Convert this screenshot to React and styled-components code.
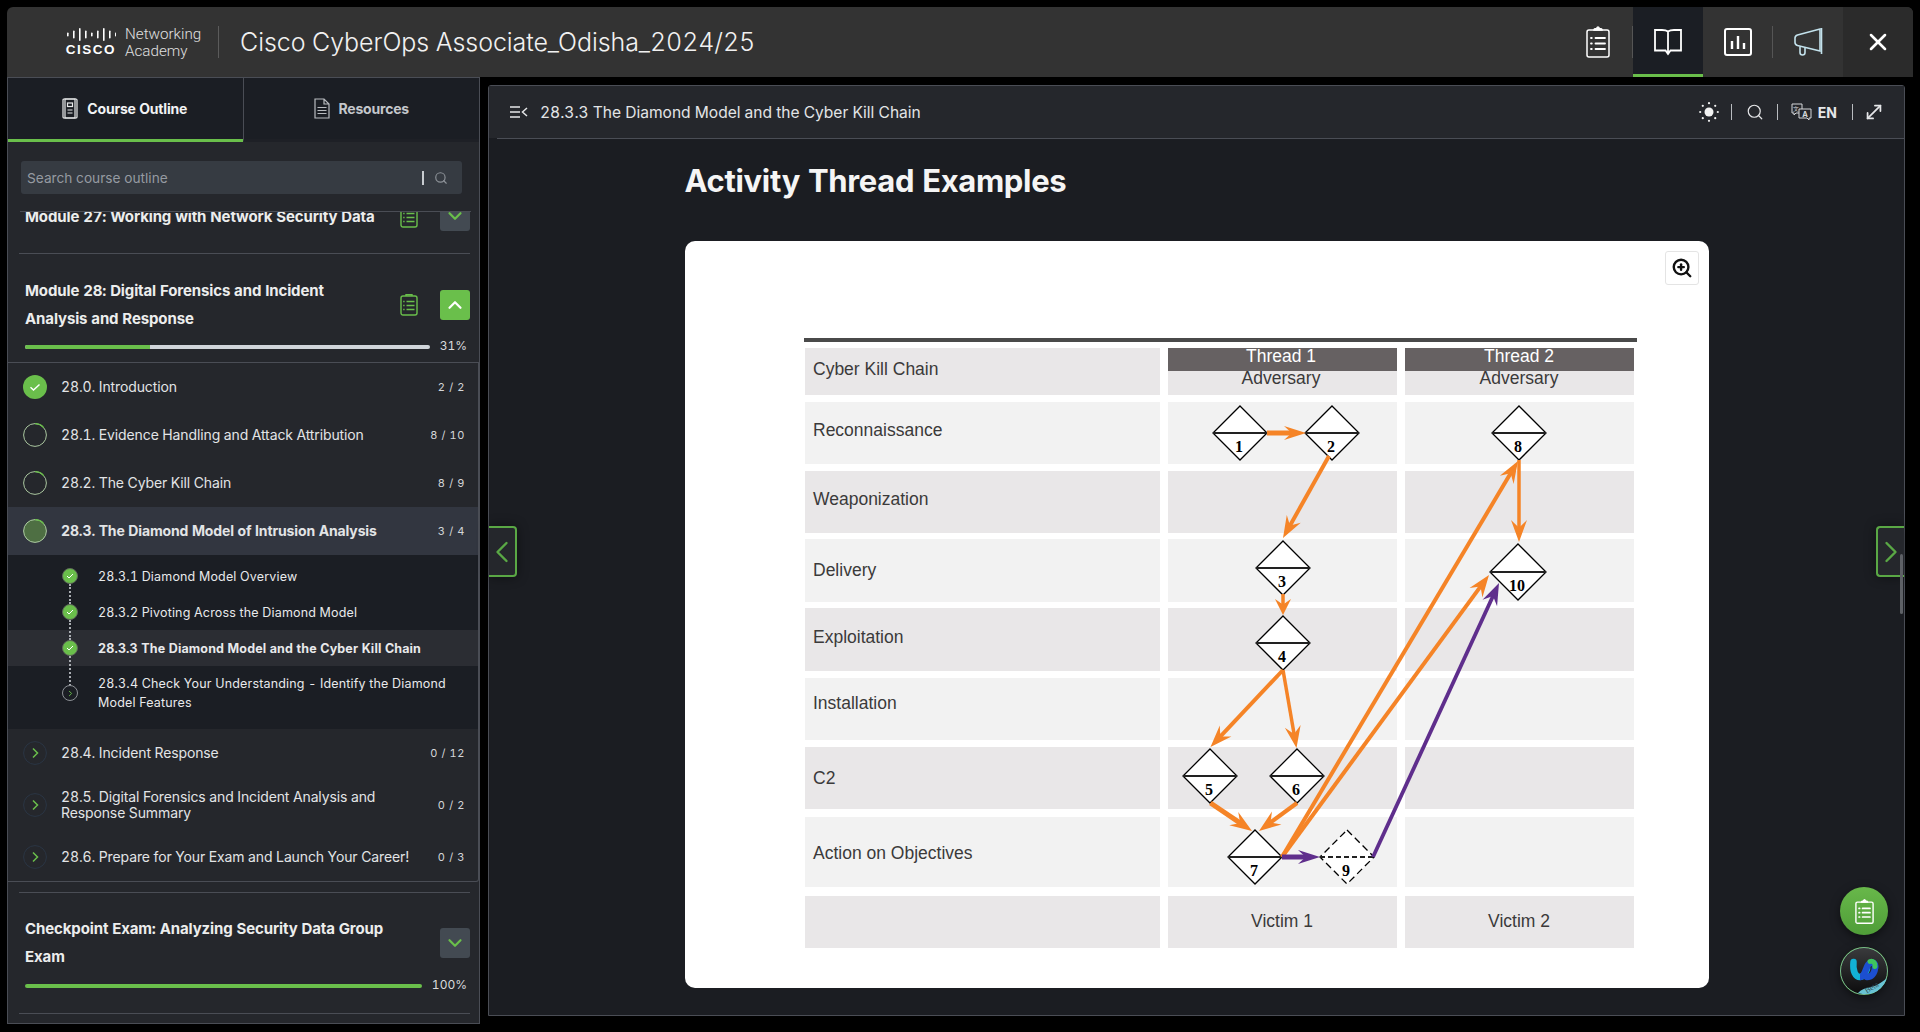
import React from "react";
import styled, { createGlobalStyle } from "styled-components";
import { ChevronDown, ChevronLeft, ChevronRight, ChevronUp, MoveDiagonal, Search, X, ZoomIn } from "lucide-react";

const GREEN = "#6abf4b";

const GlobalStyle = createGlobalStyle`
    html, body {
        margin: 0;
        height: 100%;
        background: #000;
        overflow: hidden;
    }
    body {
        font-family: Inter, "Liberation Sans", sans-serif;
        font-variant-numeric: tabular-nums;
        color: #e4e6e8;
    }
    * { box-sizing: border-box; }
`;

const Shell = styled.div`
    width: 1920px;
    height: 1032px;
    padding: 7px 7px 8px;
    display: flex;
    flex-direction: column;
`;

// 상단 헤더
const Header = styled.header`
    height: 70px;
    flex: none;
    display: flex;
    align-items: center;
    background: #333;
    border-radius: 6px 6px 0 0;
`;

const Brand = styled.div`
    display: flex;
    align-items: center;
    padding-left: 53px;
    height: 100%;
    flex: 1;
`;

const LogoMark = styled.div`
    width: 62px;
    display: flex;
    flex-direction: column;
    align-items: center;
    color: #fff;
`;

const LogoWord = styled.span`
    font-family: "Liberation Sans", sans-serif;
    font-weight: 700;
    font-size: 13.5px;
    letter-spacing: 1.5px;
    line-height: 13px;
    margin-top: 2px;
`;

const AcademyText = styled.div`
    font-family: Roboto, sans-serif;
    font-size: 15.2px;
    font-weight: 300;
    line-height: 17px;
    color: #e0e0e0;
    width: 94px;
    height: 32px;
    margin-left: 3px;
    border-right: 1px solid #5b5b5b;
`;

const CourseTitle = styled.h1`
    margin: 0 0 0 21px;
    font-size: 25px;
    font-weight: 300;
    letter-spacing: -0.07px;
    color: #f1f1f1;
    white-space: nowrap;
`;

const NavButton = styled.button`
    position: relative;
    width: 70px;
    height: 70px;
    padding: 3px 0 0;
    flex: none;
    border: 0;
    display: flex;
    align-items: center;
    justify-content: center;
    color: #fff;
    background: ${(p) => (p.$active ? "#1b1e24" : p.$dim ? "#2b2b2b" : "transparent")};
    border-bottom: 3px solid ${(p) => (p.$active ? GREEN : "transparent")};
    border-top-right-radius: ${(p) => (p.$dim ? "6px" : "0")};

    &::after {
        content: "";
        display: ${(p) => (p.$sep ? "block" : "none")};
        position: absolute;
        right: 0;
        top: 19px;
        height: 32px;
        width: 1px;
        background: #555;
    }
`;

const Body = styled.div`
    flex: 1;
    display: flex;
    gap: 8px;
    min-height: 0;
`;

// 왼쪽 사이드바
const Sidebar = styled.aside`
    width: 473px;
    flex: none;
    display: flex;
    flex-direction: column;
    background: #25272c;
    border: 1px solid #4a4d55;
    border-top: 0;
    overflow: hidden;
`;

const Tabs = styled.div`
    height: 65px;
    flex: none;
    display: flex;
    margin-left: -1px;
`;

const Tab = styled.div`
    flex: 1;
    display: flex;
    align-items: center;
    justify-content: center;
    gap: 9px;
    font-size: 14px;
    font-weight: 700;
    letter-spacing: -0.2px;
    color: ${(p) => (p.$active ? "#f2f3f4" : "#c4c7cb")};
    background: #1b1e24;
    border-top: 1px solid #4a4d55;
    border-bottom: 3px solid ${(p) => (p.$active ? GREEN : "#1e2026")};
    border-left: ${(p) => (p.$active ? "0" : "1px solid #4a4d55")};
`;

const SearchWrap = styled.div`
    height: 69px;
    flex: none;
    padding: 19px 17px 0 13px;
`;

const SearchBox = styled.div`
    height: 33px;
    display: flex;
    align-items: center;
    padding: 0 14px 0 6px;
    border-radius: 3px;
    background: #363b42;
    font-size: 13.7px;
    color: #959aa1;
`;

const SearchText = styled.span`
    flex: 1;
`;

const SearchBar = styled.span`
    width: 2px;
    height: 14px;
    margin-right: 10px;
    background: #c8ccd0;
`;

const ScrollArea = styled.div`
    position: relative;
    flex: 1;
    min-height: 0;
    overflow: hidden;

    &::before {
        content: "";
        position: absolute;
        top: 0;
        left: 12px;
        right: 8px;
        height: 1px;
        background: #4a4d55;
        z-index: 1;
    }
`;

const ScrollInner = styled.div`
    margin-top: -10px;
`;

const ModuleHead = styled.div`
    display: flex;
    align-items: center;
    padding: 0 9px 0 17px;
    min-height: ${(p) => (p.$compact ? "30px" : "56px")};
`;

const ModuleTitle = styled.div`
    flex: 1;
    font-size: 15px;
    font-weight: 700;
    line-height: 28px;
    letter-spacing: -0.12px;
    color: #eceded;
    max-width: ${(p) => p.$max || 374}px;
    padding-top: ${(p) => p.$nudge || 0}px;
`;

const ModuleIcons = styled.div`
    margin-left: auto;
    display: flex;
    align-items: center;
    gap: 22px;
    color: ${GREEN};
`;

const ToggleButton = styled.div`
    width: 30px;
    height: 30px;
    display: flex;
    align-items: center;
    justify-content: center;
    border-radius: 3px;
    background: ${(p) => (p.$open ? GREEN : "#434a52")};
    color: ${(p) => (p.$open ? "#fff" : GREEN)};
`;

const Divider = styled.div`
    height: 1px;
    margin: ${(p) => p.$top}px 9px 0 11px;
    background: #4a4d55;
`;

const ModuleBlock = styled.div`
    padding-top: ${(p) => p.$top}px;
`;

const ProgressRow = styled.div`
    display: flex;
    align-items: center;
    padding: 0 12px 0 17px;
    margin-top: ${(p) => p.$top}px;
    height: 14px;
`;

const Track = styled.div`
    flex: 1;
    height: 4px;
    border-radius: 2px;
    background: #d0d5da;
    overflow: hidden;
`;

const TrackFill = styled.div`
    height: 100%;
    background: ${GREEN};
`;

const Percent = styled.span`
    margin: -3px 0 0 10px;
    font-size: 12px;
    color: #d8dadc;
`;

const TopicList = styled.div`
    margin-top: 8px;
    border-top: 1px solid #4a4d55;
    border-bottom: 1px solid #4a4d55;
    border-right: 1px solid #4a4d55;
    border-bottom-right-radius: 3px;
`;

const TopicRow = styled.div`
    display: flex;
    align-items: center;
    min-height: 48px;
    padding: ${(p) => (p.$tall ? "12px" : "0")} 13px ${(p) => (p.$tall ? "12px" : "0")} 15px;
    background: ${(p) => (p.$active ? "#323640" : "transparent")};
`;

const TopicName = styled.div`
    flex: 1;
    margin-left: 14px;
    font-size: 14px;
    line-height: 16px;
    letter-spacing: ${(p) => (p.$active ? "-0.13px" : "-0.12px")};
    font-weight: ${(p) => (p.$active ? 700 : 400)};
    color: #e2e4e6;
    padding-right: 16px;
`;

const TopicCount = styled.span`
    font-size: 11px;
    letter-spacing: 0.6px;
    color: #d4d6d9;
    white-space: pre;
`;

const SubList = styled.div`
    background: #1b1e24;
    padding: 3px 0 17px;
`;

const SubRow = styled.div`
    display: flex;
    align-items: center;
    padding: ${(p) => (p.$wrap ? "8px" : "0")} 24px 0 54px;
    min-height: 36px;
    background: ${(p) => (p.$active ? "#2b2d33" : "transparent")};
`;

const SubIcon = styled.div`
    position: relative;
    width: 16px;
    height: 16px;
    flex: none;
    border-radius: 50%;
    display: flex;
    align-items: center;
    justify-content: center;
    background: ${(p) => (p.$done ? GREEN : "transparent")};
    border: 1px solid ${(p) => (p.$done ? "#5d6a58" : "#8d9196")};
    color: ${(p) => (p.$done ? "#fff" : GREEN)};

    &::after {
        content: "";
        display: ${(p) => (p.$last ? "none" : "block")};
        position: absolute;
        left: 5.5px;
        top: 15px;
        height: ${(p) => p.$gap || 21}px;
        border-left: 2px dotted #a9adb2;
    }
`;

const SubName = styled.div`
    margin-left: 20px;
    font-size: 12.5px;
    line-height: 19px;
    letter-spacing: ${(p) => (p.$active ? "0.13px" : "0.17px")};
    font-weight: ${(p) => (p.$active ? 700 : 400)};
    color: #e8e9eb;
`;

// 오른쪽 메인 패널
const Panel = styled.main`
    position: relative;
    flex: 1;
    margin: 8px 8px 0 0;
    height: 931px;
    display: flex;
    flex-direction: column;
    background: #1b1d22;
    border: 1px solid #4a4d55;
    border-radius: 3px 3px 0 0;
`;

const PanelBar = styled.div`
    height: 52px;
    flex: none;
    display: flex;
    align-items: center;
    padding-left: 21px;
    background: #25272c;
`;

const PanelRule = styled.div`
    height: 1px;
    flex: none;
    margin-left: 8px;
    background: #4a4d55;
`;

const PanelTitle = styled.div`
    margin-left: 12px;
    flex: 1;
    font-size: 15.6px;
    letter-spacing: -0.03px;
    color: #e2e4e6;
`;

const ToolGroup = styled.div`
    display: flex;
    align-items: center;
    color: #e6e7e9;
    padding-right: 19px;
`;

const ToolSep = styled.span`
    width: 1px;
    height: 16px;
    margin: 0 ${(p) => p.$right}px 0 ${(p) => p.$left}px;
    background: #b9bcc0;
`;

const LangLabel = styled.span`
    margin-left: 6px;
    font-size: 14px;
    font-weight: 700;
`;

const Content = styled.div`
    flex: 1;
    padding-top: 22px;
    display: flex;
    flex-direction: column;
    align-items: center;
`;

const PageHeading = styled.h2`
    margin: 0 0 40px;
    width: 1024px;
    height: 40px;
    font-size: 31px;
    line-height: 40px;
    font-weight: 700;
    letter-spacing: -0.33px;
    color: #f5f5f5;
`;

const Card = styled.div`
    position: relative;
    width: 1024px;
    height: 747px;
    background: #fff;
    border-radius: 10px;
    overflow: hidden;
`;

const ChartSvg = styled.svg`
    display: block;
`;

const ZoomButton = styled.div`
    position: absolute;
    top: 10px;
    right: 10px;
    width: 34px;
    height: 34px;
    display: flex;
    align-items: center;
    justify-content: center;
    background: #fff;
    border: 1px solid #e4e4e4;
    border-radius: 3px;
    color: #111;
`;

const SlideTab = styled.div`
    position: absolute;
    top: 440px;
    ${(p) => (p.$side === "left" ? "left: 0;" : "right: 0;")}
    width: 28px;
    height: 51px;
    display: flex;
    align-items: center;
    justify-content: center;
    color: #5aa845;
    background: #25272c;
    border: 2px solid #5aa845;
    border-${(p) => (p.$side === "left" ? "left" : "right")}: 0;
    border-radius: ${(p) => (p.$side === "left" ? "0 4px 4px 0" : "4px 0 0 4px")};
    box-shadow: 0 0 12px rgba(0, 0, 0, 0.45);

    svg {
        flex: none;
    }
`;

const ScrollThumb = styled.div`
    position: absolute;
    right: 1px;
    top: 468px;
    width: 3px;
    height: 60px;
    background: #5e6166;
    border-radius: 2px;
`;

const RoundButton = styled.div`
    position: absolute;
    right: 16px;
    top: ${(p) => p.$top}px;
    width: 48px;
    height: 48px;
    border-radius: 50%;
    display: flex;
    align-items: center;
    justify-content: center;
    color: #fff;
    background: linear-gradient(#68b84a, #4f9d38);
    box-shadow: 0 3px 10px rgba(0, 0, 0, 0.5);
    overflow: hidden;
`;

const modules = [
    { id: "28.0", name: "28.0. Introduction", count: "2 / 2", status: "done" },
    { id: "28.1", name: "28.1. Evidence Handling and Attack Attribution", count: "8 / 10", status: "ring", pct: 0.14 },
    { id: "28.2", name: "28.2. The Cyber Kill Chain", count: "8 / 9", status: "ring", pct: 0.14 },
    { id: "28.3", name: "28.3. The Diamond Model of Intrusion Analysis", count: "3 / 4", status: "current", pct: 0.14, active: true },
];

const laterModules = [
    { id: "28.4", name: "28.4. Incident Response", count: "0 / 12" },
    { id: "28.5", name: "28.5. Digital Forensics and Incident Analysis and Response Summary", count: "0 / 2", tall: true },
    { id: "28.6", name: "28.6. Prepare for Your Exam and Launch Your Career!", count: "0 / 3" },
];

function StatusRing({ status, pct = 0 }) {
    const r = 11.4;
    const c = 2 * Math.PI * r;
    if (status === "closed") {
        return (
            <svg width="24" height="24" viewBox="0 0 24 24" fill="none">
                <circle cx="12" cy="12" r={r} stroke="#2a3544" />
                <path d="M10 7.5l4.5 4.5-4.5 4.5" stroke={GREEN} strokeWidth="1.5" />
            </svg>
        );
    }
    if (status === "done") {
        return (
            <svg width="24" height="24" viewBox="0 0 24 24" fill="none">
                <circle cx="12" cy="12" r="12" fill={GREEN} />
                <path d="M7.5 12.3l3 2.7 6-5.6" stroke="#fff" strokeWidth="1.4" />
            </svg>
        );
    }
    return (
        <svg width="24" height="24" viewBox="0 0 24 24" fill="none">
            <circle cx="12" cy="12" r={r} fill={status === "current" ? "#4e6f43" : "none"} stroke="#b9d8ad" strokeWidth="0.9" />
            <circle
                cx="12"
                cy="12"
                r={r}
                stroke={GREEN}
                strokeWidth="1.3"
                strokeDasharray={`${c * pct} ${c}`}
                transform="rotate(-90 12 12)"
            />
        </svg>
    );
}

function NotesIcon() {
    return (
        <svg width="18" height="23" viewBox="0 0 18 23" fill="none" stroke={GREEN} strokeWidth="1.4">
            <rect x="1" y="3" width="16" height="19" rx="2" />
            <path d="M6 3V1.8h6V3" />
            <path d="M6.5 8.5h8M6.5 12.5h8M6.5 16.5h8M3.2 8.5h1.4M3.2 12.5h1.4M3.2 16.5h1.4" />
        </svg>
    );
}

function ClipboardIcon({ width, height, stroke = 1.5 }) {
    return (
        <svg width={width} height={height} viewBox="0 0 24 32" fill="none" stroke="#fff" strokeWidth={stroke} strokeLinecap="round">
            <rect x="1" y="4" width="22" height="27" rx="2" />
            <path fill="#fff" d="M8 4c0-1 1-1.500 2.500-1.500C11 1.500 11.500 1 12 1s1 .5 1.500 1.500C15 2.500 16 3 16 4z" />
            <path strokeWidth={stroke * 1.2} d="M9.500 12H19M9.500 17.500H19M9.500 23H19M5 12h.8M5 17.500h.8M5 23h.8" />
        </svg>
    );
}

function CiscoBars() {
    const heights = [4, 8, 13, 8, 4, 8, 13, 8, 4];
    return (
        <svg width="50" height="13" viewBox="0 0 50 13">
            {heights.map((h, i) => (
                <rect key={i} x={i * 6 + 1} y={(13 - h) / 2} width="1.6" height={h} rx="0.8" fill="#fff" />
            ))}
        </svg>
    );
}

function BookIcon() {
    return (
        <svg width="30" height="28" viewBox="0 0 30 28" fill="none" stroke="#fff" strokeWidth="1.8">
            <path d="M15 3.500C13 2 11 2 9 2H2v20.500h10.500L15 26l2.500-3.500H28V2h-7c-2 0-4 0-6 1.500zM15 3.500V26" />
        </svg>
    );
}

function BarsIcon() {
    return (
        <svg width="28" height="28" viewBox="0 0 28 28" fill="none" stroke="#fff" strokeWidth="2">
            <rect x="1" y="1" width="26" height="26" rx="2" />
            <path strokeWidth="2.4" d="M8 21v-8M14 21V8M20 21v-6" />
        </svg>
    );
}

function MegaphoneIcon() {
    return (
        <svg width="29" height="30" viewBox="0 0 29 30" fill="none" stroke="#c3e2ec" strokeWidth="1.6">
            <path d="M1 11c0-1.500 1-2.500 2.500-3L26 2v22L3.500 18.500C2 18 1 17 1 15.500z" />
            <path d="M27.500 1v26" />
            <path d="M6 19.500v6a2.500 2.500 0 0 0 5 0v-4.500" />
        </svg>
    );
}

function CollapseIcon() {
    return (
        <svg width="18" height="12" viewBox="0 0 18 12" fill="none" stroke="#e6e7e9" strokeWidth="1.5">
            <path d="M0 1h10M0 6h10M0 11h10M17 2l-4.500 4 4.500 4" />
        </svg>
    );
}

function SunIcon() {
    const dots = [0, 45, 90, 135, 180, 225, 270, 315];
    return (
        <svg width="20" height="20" viewBox="-10 -10 20 20" fill="#f2f2f2">
            <circle r="4.500" />
            {dots.map((a) => (
                <circle
                    key={a}
                    r="1.1"
                    cx={8.8 * Math.cos((a * Math.PI) / 180)}
                    cy={8.8 * Math.sin((a * Math.PI) / 180)}
                />
            ))}
        </svg>
    );
}

function TranslateIcon() {
    return (
        <svg width="21" height="18" viewBox="0 0 21 18" fill="none" stroke="#d6d8da" strokeWidth="1">
            <path d="M1 1h10v9H5l-2 2v-2H1z" />
            <path d="M8 6h12v9h-2v2l-2-2H8z" fill="#25272c" />
            <text x="14" y="13.500" fontSize="7.500" fontWeight="700" fill="#d6d8da" stroke="none" textAnchor="middle">A</text>
            <text x="5" y="7.500" fontSize="6" fill="#d6d8da" stroke="none" textAnchor="middle">文</text>
        </svg>
    );
}

function CourseIcon() {
    return (
        <svg width="16" height="21" viewBox="0 0 16 21" fill="none" stroke="#e8e9ea" strokeWidth="1.2">
            <rect x="1" y="1" width="14" height="19" rx="1" />
            <rect x="3" y="1" width="10" height="19" />
            <rect x="5.500" y="5" width="5" height="3.500" />
            <path d="M5.500 12h5M5.500 15h5" />
        </svg>
    );
}

function ResourceIcon() {
    return (
        <svg width="16" height="21" viewBox="0 0 16 21" fill="none" stroke="#b9bcc0" strokeWidth="1.2">
            <path d="M1 1h9l5 5v14H1zM10 1v5h5" />
            <path d="M3.500 9.500h9M3.500 12.500h9M3.500 15.500h9" />
        </svg>
    );
}

function CheckMini() {
    return (
        <svg width="8" height="8" viewBox="0 0 8 8" fill="none" stroke="#fff">
            <path d="M1 4l2 2 4-4" />
        </svg>
    );
}

function WebexBadge() {
    return (
        <svg width="48" height="48" viewBox="0 0 48 48">
            <defs>
                <linearGradient id="wxBg" x1="0" y1="0" x2="0" y2="1">
                    <stop offset="0" stopColor="#3a3b3d" />
                    <stop offset="1" stopColor="#0c0c0d" />
                </linearGradient>
            </defs>
            <circle cx="24" cy="24" r="23.500" fill="url(#wxBg)" stroke="#79b892" strokeWidth="1" />
            <path d="M13.500 15c-1 9 2 15 6.500 15s6-5 7-8" fill="none" stroke="#12b1d6" strokeWidth="6.500" strokeLinecap="round" />
            <path d="M20 30c4.500 0 5.500-8 8-12 3-5 8-2 7 3" fill="none" stroke="#1c4fd0" strokeWidth="6.500" />
            <path d="M35 21c-.5 6-4 9-8 9" fill="none" stroke="#1c4fd0" strokeWidth="6.500" strokeLinecap="round" />
            <path d="M30 14.500c3-1 5.500 1.500 5 5" fill="none" stroke="#3ec45e" strokeWidth="5" strokeLinecap="round" />
            <path d="M18 46c8-8 14-2 29-15-2 9-9 16-20 16-3 0-6 0-9-1z" fill="#68c3d4" />
            <text x="32" y="43" fontFamily="'Liberation Serif', serif" fontSize="8" fill="#33505a" transform="rotate(-32 32 41)" textAnchor="middle">
                Beta
            </text>
        </svg>
    );
}

// 다이어그램 데이터 (좌표는 화면 픽셀 기준)
const chartRows = [
    { y: 348, h: 47, label: "Cyber Kill Chain", ty: 369, dark: true },
    { y: 402, h: 62, label: "Reconnaissance", ty: 430 },
    { y: 471, h: 62, label: "Weaponization", ty: 499, dark: true },
    { y: 539, h: 63, label: "Delivery", ty: 570 },
    { y: 608, h: 63, label: "Exploitation", ty: 637, dark: true },
    { y: 678, h: 62, label: "Installation", ty: 703 },
    { y: 747, h: 62, label: "C2", ty: 778, dark: true },
    { y: 817, h: 70, label: "Action on Objectives", ty: 853 },
    { y: 896, h: 52, label: "", ty: 921, dark: true },
];

const diamonds = [
    { n: "1", x: 1240, y: 433 },
    { n: "2", x: 1332, y: 433 },
    { n: "8", x: 1519, y: 433 },
    { n: "3", x: 1283, y: 568 },
    { n: "10", x: 1518, y: 572, big: true },
    { n: "4", x: 1283, y: 643 },
    { n: "5", x: 1210, y: 776 },
    { n: "6", x: 1297, y: 776 },
    { n: "7", x: 1255, y: 857 },
    { n: "9", x: 1347, y: 857, dashed: true },
];

const ORANGE = "#f58427";
const PURPLE = "#5f2e8c";

const arrows = [
    { from: [1267, 433], to: [1306, 433], w: 5, c: ORANGE, len: 22, wide: 14 },
    { from: [1329, 456], to: [1283, 538], w: 4, c: ORANGE },
    { from: [1283, 594], to: [1283, 615], w: 3.5, c: ORANGE, len: 16 },
    { from: [1283, 670], to: [1210.5, 747], w: 4, c: ORANGE },
    { from: [1283, 670], to: [1296.5, 748], w: 3.5, c: ORANGE },
    { from: [1210.5, 803], to: [1252, 831], w: 5, c: ORANGE },
    { from: [1297, 803], to: [1259, 831], w: 4.2, c: ORANGE },
    { from: [1282, 857], to: [1518, 461], w: 4, c: ORANGE },
    { from: [1282, 857], to: [1489, 575], w: 4, c: ORANGE },
    { from: [1519, 460], to: [1519, 542], w: 3.5, c: ORANGE },
    { from: [1282, 857], to: [1320, 857], w: 5, c: PURPLE, len: 22, wide: 14 },
    { from: [1373, 857], to: [1499, 583], w: 3.8, c: PURPLE },
];

function Arrow({ from, to, w, c, len = 22, wide = 16 }) {
    const dx = to[0] - from[0];
    const dy = to[1] - from[1];
    const d = Math.hypot(dx, dy);
    const ux = dx / d;
    const uy = dy / d;
    const at = (back, side) => `${to[0] - ux * back - uy * side},${to[1] - uy * back + ux * side}`;
    const points = [at(0, 0), at(len, wide / 2), at(len * 0.65, 0), at(len, -wide / 2)].join(" ");
    return (
        <g>
            <line
                x1={from[0]}
                y1={from[1]}
                x2={to[0] - ux * len * 0.6}
                y2={to[1] - uy * len * 0.6}
                stroke={c}
                strokeWidth={w}
            />
            <polygon points={points} fill={c} />
        </g>
    );
}

function Diamond({ n, x, y, dashed, big }) {
    const hw = big ? 28 : 27;
    const up = big ? 28 : 27;
    const down = big ? 28 : 27;
    const dash = dashed ? "7 4" : undefined;
    return (
        <g>
            <polygon
                points={`${x},${y - up} ${x + hw},${y} ${x},${y + down} ${x - hw},${y}`}
                fill="#fff"
                stroke="#000"
                strokeWidth="1.3"
                strokeDasharray={dash}
            />
            <line x1={x - hw} y1={y} x2={x + hw} y2={y} stroke="#222" strokeWidth="2" strokeDasharray={dashed ? "5 3" : undefined} />
            <text
                x={x - 1}
                y={y + 19}
                textAnchor="middle"
                fontFamily="'Liberation Serif', serif"
                fontWeight="700"
                fontSize="16"
                fill="#000"
            >
                {n}
            </text>
        </g>
    );
}

function KillChainChart() {
    const labelFont = { fontFamily: "'Liberation Sans', sans-serif", fontSize: 17.5, fill: "#3b3a3a" };
    return (
        <ChartSvg width="1024" height="747" viewBox="685 241 1024 747">
            <rect x="804" y="338" width="833" height="4" fill="#4a4a4a" />
            {chartRows.map((r) => (
                <g key={r.y}>
                    <rect x="805" y={r.y} width="355" height={r.h} fill={r.dark ? "#e9e7e8" : "#f2f2f2"} />
                    <rect x="1168" y={r.y} width="229" height={r.h} fill={r.dark ? "#e9e7e8" : "#f2f2f2"} />
                    <rect x="1405" y={r.y} width="229" height={r.h} fill={r.dark ? "#e9e7e8" : "#f2f2f2"} />
                    <text x="813" y={r.ty + 6} {...labelFont}>{r.label}</text>
                </g>
            ))}
            <rect x="1168" y="348" width="229" height="23" fill="#666162" />
            <rect x="1405" y="348" width="229" height="23" fill="#666162" />
            <text x="1281" y="362" textAnchor="middle" {...labelFont} fill="#fff">Thread 1</text>
            <text x="1519" y="362" textAnchor="middle" {...labelFont} fill="#fff">Thread 2</text>
            <text x="1281" y="384" textAnchor="middle" {...labelFont}>Adversary</text>
            <text x="1519" y="384" textAnchor="middle" {...labelFont}>Adversary</text>
            <text x="1282" y="927" textAnchor="middle" {...labelFont}>Victim 1</text>
            <text x="1519" y="927" textAnchor="middle" {...labelFont}>Victim 2</text>
            {diamonds.map((d) => (
                <Diamond key={d.n} {...d} />
            ))}
            {arrows.map((a, i) => (
                <Arrow key={i} {...a} />
            ))}
        </ChartSvg>
    );
}

export default function App() {
    return (
        <>
            <GlobalStyle />
            <Shell>
                <Header>
                    <Brand>
                        <LogoMark>
                            <CiscoBars />
                            <LogoWord>CISCO</LogoWord>
                        </LogoMark>
                        <AcademyText>Networking<br />Academy</AcademyText>
                        <CourseTitle>Cisco CyberOps Associate_Odisha_2024/25</CourseTitle>
                    </Brand>
                    <NavButton $sep><ClipboardIcon width={24} height={32} /></NavButton>
                    <NavButton $active><BookIcon /></NavButton>
                    <NavButton $sep><BarsIcon /></NavButton>
                    <NavButton><MegaphoneIcon /></NavButton>
                    <NavButton $dim><X size={28} strokeWidth={2.2} /></NavButton>
                </Header>
                <Body>
                    <Sidebar>
                        <Tabs>
                            <Tab $active><CourseIcon />Course Outline</Tab>
                            <Tab><ResourceIcon />Resources</Tab>
                        </Tabs>
                        <SearchWrap>
                            <SearchBox>
                                <SearchText>Search course outline</SearchText>
                                <SearchBar />
                                <Search size={14} color="#8d9298" />
                            </SearchBox>
                        </SearchWrap>
                        <ScrollArea>
                            <ScrollInner>
                                <ModuleHead $compact>
                                    <ModuleTitle $nudge={2}>Module 27: Working with Network Security Data</ModuleTitle>
                                    <ModuleIcons>
                                        <NotesIcon />
                                        <ToggleButton><ChevronDown size={22} strokeWidth={2.4} /></ToggleButton>
                                    </ModuleIcons>
                                </ModuleHead>
                                <Divider $top={22} />
                                <ModuleBlock $top={22}>
                                    <ModuleHead>
                                        <ModuleTitle $max={340} $nudge={1}>Module 28: Digital Forensics and Incident Analysis and Response</ModuleTitle>
                                        <ModuleIcons>
                                            <NotesIcon />
                                            <ToggleButton $open><ChevronUp size={22} strokeWidth={2.4} /></ToggleButton>
                                        </ModuleIcons>
                                    </ModuleHead>
                                    <ProgressRow $top={7}>
                                        <Track><TrackFill style={{ width: "31%" }} /></Track>
                                        <Percent>31%</Percent>
                                    </ProgressRow>
                                </ModuleBlock>
                                <TopicList>
                                    {modules.map((m) => (
                                        <TopicRow key={m.id} $active={m.active}>
                                            <StatusRing status={m.status} pct={m.pct} />
                                            <TopicName $active={m.active}>{m.name}</TopicName>
                                            <TopicCount>{m.count}</TopicCount>
                                        </TopicRow>
                                    ))}
                                    <SubList>
                                        <SubRow>
                                            <SubIcon $done $gap={20}><CheckMini /></SubIcon>
                                            <SubName>28.3.1 Diamond Model Overview</SubName>
                                        </SubRow>
                                        <SubRow>
                                            <SubIcon $done $gap={20}><CheckMini /></SubIcon>
                                            <SubName>28.3.2 Pivoting Across the Diamond Model</SubName>
                                        </SubRow>
                                        <SubRow $active>
                                            <SubIcon $done $gap={30}><CheckMini /></SubIcon>
                                            <SubName $active>28.3.3 The Diamond Model and the Cyber Kill Chain</SubName>
                                        </SubRow>
                                        <SubRow $wrap>
                                            <SubIcon $last><ChevronRight size={9} strokeWidth={2.5} /></SubIcon>
                                            <SubName>28.3.4 Check Your Understanding - Identify the Diamond Model Features</SubName>
                                        </SubRow>
                                    </SubList>
                                    {laterModules.map((m) => (
                                        <TopicRow key={m.id} $tall={m.tall}>
                                            <StatusRing status="closed" />
                                            <TopicName>{m.name}</TopicName>
                                            <TopicCount>{m.count}</TopicCount>
                                        </TopicRow>
                                    ))}
                                </TopicList>
                                <Divider $top={10} />
                                <ModuleBlock $top={22}>
                                    <ModuleHead>
                                        <ModuleTitle>Checkpoint Exam: Analyzing Security Data Group Exam</ModuleTitle>
                                        <ModuleIcons>
                                            <ToggleButton><ChevronDown size={22} strokeWidth={2.4} /></ToggleButton>
                                        </ModuleIcons>
                                    </ModuleHead>
                                    <ProgressRow $top={8}>
                                        <Track><TrackFill style={{ width: "100%" }} /></Track>
                                        <Percent>100%</Percent>
                                    </ProgressRow>
                                </ModuleBlock>
                                <Divider $top={20} />
                            </ScrollInner>
                        </ScrollArea>
                    </Sidebar>
                    <Panel>
                        <PanelBar>
                            <CollapseIcon />
                            <PanelTitle>28.3.3 The Diamond Model and the Cyber Kill Chain</PanelTitle>
                            <ToolGroup>
                                <SunIcon />
                                <ToolSep $left={12} $right={14} />
                                <Search size={18} strokeWidth={1.6} />
                                <ToolSep $left={13} $right={13} />
                                <TranslateIcon />
                                <LangLabel>EN</LangLabel>
                                <ToolSep $left={15} $right={10} />
                                <MoveDiagonal size={22} strokeWidth={1.9} />
                            </ToolGroup>
                        </PanelBar>
                        <PanelRule />
                        <Content>
                            <PageHeading>Activity Thread Examples</PageHeading>
                            <Card>
                                <KillChainChart />
                                <ZoomButton><ZoomIn size={22} strokeWidth={2.6} /></ZoomButton>
                            </Card>
                        </Content>
                        <SlideTab $side="left"><ChevronLeft size={36} strokeWidth={1.6} /></SlideTab>
                        <SlideTab $side="right"><ChevronRight size={36} strokeWidth={1.6} /></SlideTab>
                        <ScrollThumb />
                        <RoundButton $top={801}><ClipboardIcon width={19} height={25} stroke={1.8} /></RoundButton>
                        <RoundButton $top={861}><WebexBadge /></RoundButton>
                    </Panel>
                </Body>
            </Shell>
        </>
    );
}
